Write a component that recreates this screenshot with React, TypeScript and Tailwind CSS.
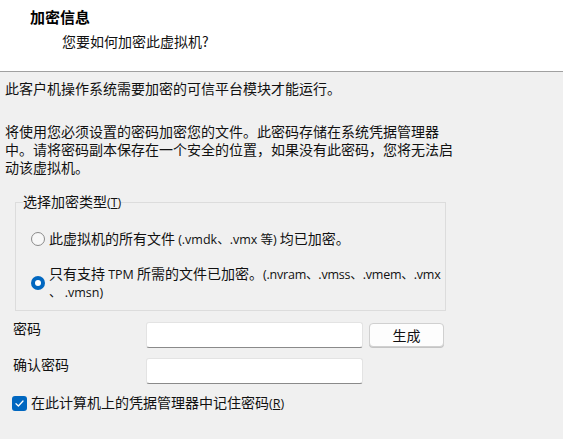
const CJK = '"Noto Sans CJK SC", "Noto Sans", sans-serif';
const LATIN = '"Open Sans", "Noto Sans", "Noto Sans CJK SC", sans-serif';

const Lat = ({ children }: { children: React.ReactNode }) => (
  <span className="text-[12.5px]" style={{ fontFamily: LATIN }}>
    {children}
  </span>
);

const Radio = ({ checked }: { checked?: boolean }) =>
  checked ? (
    <span className="flex h-[14px] w-[14px] shrink-0 items-center justify-center rounded-full bg-[#0067c0]">
      <span className="h-[6px] w-[6px] rounded-full bg-white" />
    </span>
  ) : (
    <span className="h-[14px] w-[14px] shrink-0 rounded-full border border-[#8a8a8a] bg-[#f7f7f7]" />
  );

const TextBox = () => (
  <div className="h-[26px] w-[217px] rounded-[3px] border border-[#e3e3e3] border-b-[#8a8a8a] bg-white" />
);

export default function App() {
  return (
    <div
      className="h-[439px] w-[563px] overflow-hidden bg-[#f0f0f0] text-[14px] leading-[18px] text-[#111]"
      style={{ fontFamily: CJK }}
    >
      {/* Header */}
      <div className="h-[72px] border-b border-[#a0a0a0] bg-white pt-[7px]">
        <p className="pl-[30px] text-[15px] font-bold leading-[20px] text-black">加密信息</p>
        <p className="mt-[4px] pl-[62px] text-[14px] leading-[20px]">您要如何加密此虚拟机?</p>
      </div>

      {/* Body */}
      <div className="px-[5px] pt-[7px]">
        <p>此客户机操作系统需要加密的可信平台模块才能运行。</p>

        <p className="mt-[25px] w-[450px]">
          将使用您必须设置的密码加密您的文件。此密码存储在系统凭据管理器中。请将密码副本保存在一个安全的位置，如果没有此密码，您将无法启动该虚拟机。
        </p>

        {/* Encryption type group */}
        <fieldset className="mt-[16px] ml-[10px] w-[431px] border border-[#dcdcdc] pr-[2px] pb-[9px] pl-[15px]">
          <legend className="ml-[-8px] px-[0px]">
            选择加密类型
            <Lat>
              (<span className="underline">T</span>)
            </Lat>
          </legend>

          <div className="mt-[17px] flex items-center gap-[4px] whitespace-nowrap">
            <Radio />
            <span>
              此虚拟机的所有文件 <Lat>(.vmdk、.vmx 等)</Lat> 均已加密。
            </span>
          </div>

          <div className="mt-[16px] flex items-center gap-[4px] whitespace-nowrap">
            <Radio checked />
            <span className="leading-[16px]">
              只有支持 <Lat>TPM</Lat> 所需的文件已加密。
              <span className="tracking-[-0.2px]">
                <Lat>(.nvram、.vmss、.vmem、.vmx</Lat>
              </span>
              <br />
              <Lat>、 .vmsn)</Lat>
            </span>
          </div>
        </fieldset>

        {/* Password fields */}
        <div className="mt-[11px] flex flex-col gap-[10px] pl-[8px]">
          <div className="flex items-start">
            <span className="mt-[-3px] w-[133px]">密码</span>
            <TextBox />
            <button
              className="mt-[1px] ml-[6px] h-[24px] w-[75px] rounded-[4px] border border-[#d0d0d0] bg-[#fdfdfd] text-[14px] leading-[20px] shadow-[0_1px_0_#c4c4c4]"
              style={{ fontFamily: CJK }}
            >
              生成
            </button>
          </div>
          <div className="flex items-start">
            <span className="mt-[-3px] w-[133px]">确认密码</span>
            <TextBox />
          </div>
        </div>

        {/* Remember checkbox */}
        <div className="mt-[9px] flex items-center gap-[4px] pl-[7px]">
          <span className="flex h-[15px] w-[15px] items-center justify-center rounded-[3px] bg-[#0067c0]">
            <svg width="11" height="11" viewBox="0 0 11 11" fill="none">
              <path d="M2 5.8 L4.4 8 L9 3" stroke="white" strokeWidth="1.3" strokeLinecap="round" strokeLinejoin="round" />
            </svg>
          </span>
          <span>
            在此计算机上的凭据管理器中记住密码
            <Lat>
              (<span className="underline">R</span>)
            </Lat>
          </span>
        </div>
      </div>
    </div>
  );
}
